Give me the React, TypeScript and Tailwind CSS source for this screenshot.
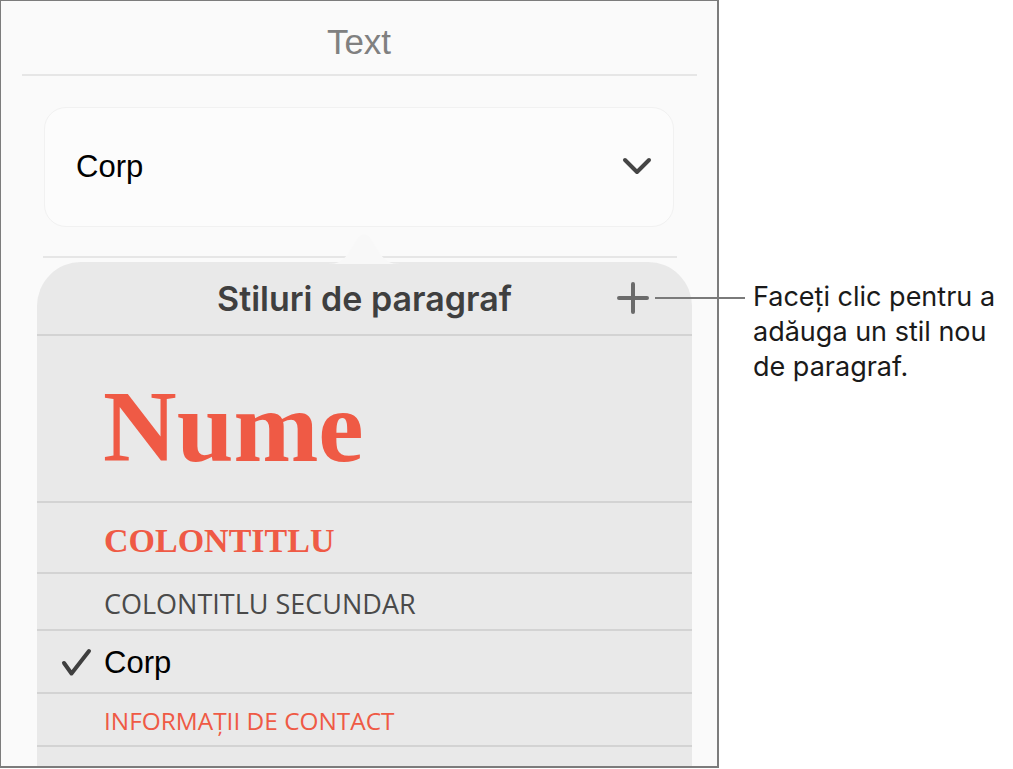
import React from "react";

const sans = { fontFamily: '"Liberation Sans", Arial, sans-serif' };

const Check = () => (
  <svg width="32" height="30" viewBox="0 0 32 30" className="shrink-0">
    <path d="M3 15 L10.5 25.5 L28 3" fill="none" stroke="#3f3f3f" strokeWidth="4" strokeLinecap="round" strokeLinejoin="round" />
  </svg>
);

const Plus = () => (
  <svg width="32" height="32" viewBox="0 0 32 32">
    <path d="M16 2 V30 M2 16 H30" stroke="#6b6b6b" strokeWidth="4" strokeLinecap="round" />
  </svg>
);

const Chevron = () => (
  <svg width="30" height="20" viewBox="0 0 30 20">
    <path d="M3 3 L15 15 L27 3" fill="none" stroke="#454545" strokeWidth="4" strokeLinecap="round" strokeLinejoin="round" />
  </svg>
);

export default function App() {
  return (
    <div className="relative flex w-[1013px] h-[769px] bg-white overflow-hidden" style={sans}>
      {/* device screen */}
      <div className="w-[719px] h-[768px] shrink-0 border-t border-l border-r-2 border-b-2 border-[#7c7c7c] bg-[#fafafa] overflow-hidden flex flex-col">
        <div className="h-[73px] pt-[23px] text-center text-[35px] leading-none text-[#808080]">Text</div>
        <div className="ml-[21px] w-[675px] h-[2px] bg-[#e6e6e6]" />

        <div className="mt-[31px] ml-[43px] w-[630px] h-[120px] rounded-[22px] bg-[#fcfcfc] border border-[#f1f1f1] flex items-center justify-between pl-[31px] pr-[21px]">
          <span className="text-[31px] text-black">Corp</span>
          <Chevron />
        </div>

        <div className="mt-[29px] ml-[42px] w-[634px] h-[2px] bg-[#e6e6e6]" />

        <div className="relative mt-[4px] ml-[36px] w-[655px] flex-1 rounded-t-[44px] bg-[#e9e9e9] flex flex-col">
          <svg className="absolute left-[291px] top-[-29px]" width="72" height="31" viewBox="0 0 72 31">
            <path d="M0 31 C10 31 14 28 20 21 L30 5 C33 0 39 0 42 5 L52 21 C58 28 62 31 72 31 Z" fill="#f8f8f8" />
          </svg>

          <div className="h-[74px] grid grid-cols-[1fr_auto_1fr] items-center border-b-2 border-[#d3d3d3]">
            <div />
            <span className="text-[34px] leading-none font-semibold text-[#3f3f3f] pt-[2px]" style={{ fontFamily: "Inter, sans-serif" }}>
              Stiluri de paragraf
            </span>
            <div className="flex justify-end pr-[43px]">
              <Plus />
            </div>
          </div>

          <div className="h-[167px] pt-[40px] pl-[66px] border-b-2 border-[#d3d3d3]">
            <span className="text-[102px] leading-none font-bold text-[#ef5a45]" style={{ fontFamily: '"Liberation Serif", serif' }}>
              Nume
            </span>
          </div>

          <div className="h-[71px] pt-[21px] pl-[67px] border-b-2 border-[#d3d3d3]">
            <span className="text-[34px] leading-none font-bold text-[#ef5a45]" style={{ fontFamily: '"Liberation Serif", serif' }}>
              COLONTITLU
            </span>
          </div>

          <div className="h-[57px] flex items-center pl-[67px] pt-[3px] border-b-2 border-[#d3d3d3]">
            <span className="text-[27px] leading-none text-[#4a4a4a]" style={{ fontFamily: '"Open Sans", sans-serif' }}>
              COLONTITLU SECUNDAR
            </span>
          </div>

          <div className="h-[63px] flex items-center gap-[11px] pl-[24px] pt-[2px] border-b-2 border-[#d3d3d3]">
            <Check />
            <span className="text-[31px] leading-none text-black">Corp</span>
          </div>

          <div className="h-[53px] flex items-center pl-[67px] pt-[3px] border-b-2 border-[#d3d3d3]">
            <span className="text-[24.4px] leading-none text-[#ef5a45]" style={{ fontFamily: '"Open Sans", sans-serif' }}>
              INFORMAȚII DE CONTACT
            </span>
          </div>
        </div>
      </div>

      {/* callout */}
      <div className="absolute left-[655px] top-[297px] w-[90px] h-[2px] bg-[#7a7a7a]" />
      <div className="pl-[34px] pt-[279px] text-[27px] leading-[35px] text-[#1a1a1a]" style={{ fontFamily: "Inter, sans-serif" }}>
        <p>Faceți clic pentru a</p>
        <p>adăuga un stil nou</p>
        <p>de paragraf.</p>
      </div>
    </div>
  );
}
